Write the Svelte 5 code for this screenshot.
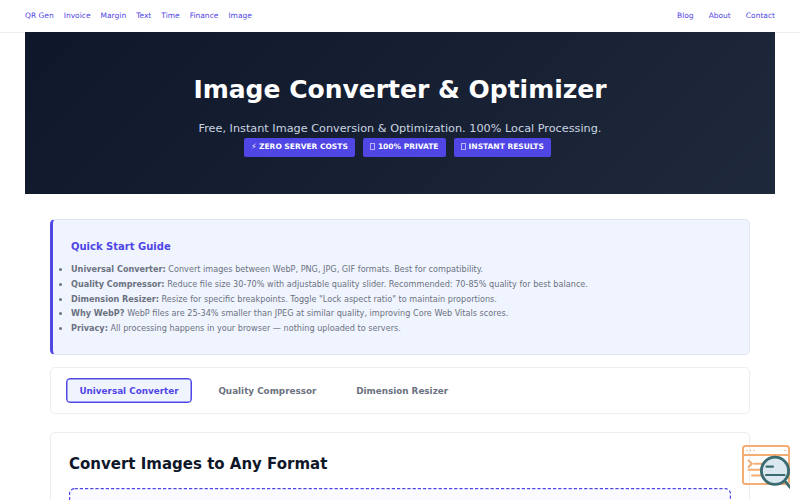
<script lang="ts">
	const tools = ['QR Gen', 'Invoice', 'Margin', 'Text', 'Time', 'Finance', 'Image'];
	const pages = ['Blog', 'About', 'Contact'];
	const tabs = ['Universal Converter', 'Quality Compressor', 'Dimension Resizer'];

	const badges = [
		{ icon: '⚡', label: 'ZERO SERVER COSTS' },
		{ icon: '', label: '100% PRIVATE' },
		{ icon: '', label: 'INSTANT RESULTS' }
	];

	const tips = [
		{ term: 'Universal Converter:', text: 'Convert images between WebP, PNG, JPG, GIF formats. Best for compatibility.' },
		{ term: 'Quality Compressor:', text: 'Reduce file size 30-70% with adjustable quality slider. Recommended: 70-85% quality for best balance.' },
		{ term: 'Dimension Resizer:', text: 'Resize for specific breakpoints. Toggle "Lock aspect ratio" to maintain proportions.' },
		{ term: 'Why WebP?', text: 'WebP files are 25-34% smaller than JPEG at similar quality, improving Core Web Vitals scores.' },
		{ term: 'Privacy:', text: 'All processing happens in your browser — nothing uploaded to servers.' }
	];

	let active = $state(tabs[0]);
</script>

<div class="page">
	<nav class="nav">
		<div class="links">
			{#each tools as tool}
				<a href="#{tool}">{tool}</a>
			{/each}
		</div>
		<div class="links links-right">
			{#each pages as item}
				<a href="#{item}">{item}</a>
			{/each}
		</div>
	</nav>

	<header class="hero">
		<h1>Image Converter &amp; Optimizer</h1>
		<p>Free, Instant Image Conversion &amp; Optimization. 100% Local Processing.</p>
		<div class="badges">
			{#each badges as badge}
				<span class="badge">
					{#if badge.icon}{badge.icon}{:else}<i class="glyph-box"></i>{/if}
					{badge.label}
				</span>
			{/each}
		</div>
	</header>

	<main>
		<section class="guide">
			<h3>Quick Start Guide</h3>
			<ul>
				{#each tips as tip}
					<li><strong>{tip.term}</strong> {tip.text}</li>
				{/each}
			</ul>
		</section>

		<div class="tabs">
			{#each tabs as tab}
				<button class="tab" class:active={active === tab} onclick={() => (active = tab)}>{tab}</button>
			{/each}
		</div>

		<section class="panel">
			<h2>Convert Images to Any Format</h2>
			<svg class="dropzone" width="662" height="120">
				<rect x="0.6" y="0.6" width="660.8" height="118" rx="5" />
			</svg>
		</section>
	</main>

	<svg class="inspect" viewBox="0 0 48 44" fill="none" stroke-linecap="round">
		<g stroke="#f4ae74" stroke-width="2">
			<rect x="1" y="1" width="46" height="38" rx="2.5" />
			<path d="M1 10h46" />
			<path d="M5 5.4h.1M8.5 5.4h.1M12 5.4h.1M43 5.4h.1" stroke-width="1.4" />
			<path d="M6.5 15.5l3.5 3.2-3.5 3.2M12.5 18.7h8M6.5 24.8h12M10 30.6h9" />
		</g>
		<path d="M43.3 36.5l5 6" stroke="#396b70" stroke-width="2.8" />
		<circle cx="33" cy="25.8" r="13.6" fill="#dce8f0" stroke="#396b70" stroke-width="2.8" />
		<path d="M24.5 21.6h6.500M24 30h18.500" stroke="#396b70" stroke-width="2.2" />
	</svg>
</div>

<style>
	:global(body) {
		background: #fff;
	}

	.page {
		height: 500px;
		overflow: hidden;
		font-family: 'DejaVu Sans', sans-serif;
		color: #0f172a;
	}

	.nav {
		display: flex;
		justify-content: space-between;
		align-items: center;
		box-sizing: border-box;
		height: 33px;
		padding: 0 25px 1px;
		border-bottom: 1px solid #eceef2;
	}

	.links {
		display: flex;
		gap: 10px;
	}

	.links-right {
		gap: 15px;
	}

	.links a {
		font-size: 7.5px;
		color: #4f46e5;
		text-decoration: none;
	}

	.hero {
		box-sizing: border-box;
		height: 162px;
		margin: -1px 25px 0;
		padding-top: 40px;
		text-align: center;
		background: linear-gradient(135deg, #0f172a 0%, #1e293b 100%);
	}

	h1 {
		margin: 0;
		font-size: 25px;
		line-height: 35px;
		color: #fff;
	}

	.hero p {
		margin: 13px 0 0;
		font-size: 11.25px;
		line-height: 17px;
		color: #cbd5e1;
	}

	.badges {
		display: flex;
		justify-content: center;
		gap: 8px;
		padding-top: 0.5px;
		padding-right: 5px;
	}

	.badge {
		padding: 0 7.2px 1px;
		border-radius: 2px;
		font-size: 7.5px;
		font-weight: bold;
		line-height: 18px;
		color: #fff;
		background: #4f46e5;
	}

	.glyph-box {
		display: inline-block;
		box-sizing: border-box;
		width: 4.5px;
		height: 7px;
		margin: 0 0.3px;
		border: 1px solid #b9b5f5;
		vertical-align: -1.5px;
	}

	main {
		padding: 25px 50px 0;
	}

	.guide {
		box-sizing: border-box;
		height: 136px;
		padding: 19px 18px 0;
		border: 1px solid #e2e5f5;
		border-left: 3px solid #4f46e5;
		border-radius: 5px;
		background: #f0f4ff;
	}

	h3 {
		margin: 0;
		font-size: 10px;
		line-height: 16px;
		color: #4f46e5;
	}

	ul {
		margin: 7.4px 0 0;
		padding: 0;
		font-size: 8.14px;
		line-height: 14.625px;
		color: #6b7280;
	}

	.tabs {
		display: flex;
		align-items: center;
		gap: 13px;
		box-sizing: border-box;
		height: 47px;
		margin-top: 12px;
		padding: 0 15px;
		border: 1px solid #eceef2;
		border-radius: 5px;
	}

	.tab {
		height: 25px;
		padding: 0 12.4px;
		border: 1px solid transparent;
		border-radius: 4px;
		font-family: inherit;
		font-size: 8.82px;
		font-weight: bold;
		color: #6b7280;
		background: none;
		cursor: pointer;
	}

	.tab.active {
		border-color: #4f46e5;
		color: #4f46e5;
		background: #f0f4ff;
		box-shadow: inset 0 0 0 0.5px #4f46e5;
	}

	.panel {
		margin-top: 18px;
		padding: 19px 18px;
		border: 1px solid #eceef2;
		border-radius: 5px;
	}

	h2 {
		margin: 0;
		font-size: 15px;
		line-height: 24px;
	}

	.dropzone {
		display: block;
		margin-top: 12px;
		fill: #fafbff;
		stroke: #4f46e5;
		stroke-width: 1.2;
		stroke-dasharray: 3.2 2;
	}

	.inspect {
		position: absolute;
		left: 742px;
		top: 445px;
		width: 48px;
		height: 44px;
	}
</style>
